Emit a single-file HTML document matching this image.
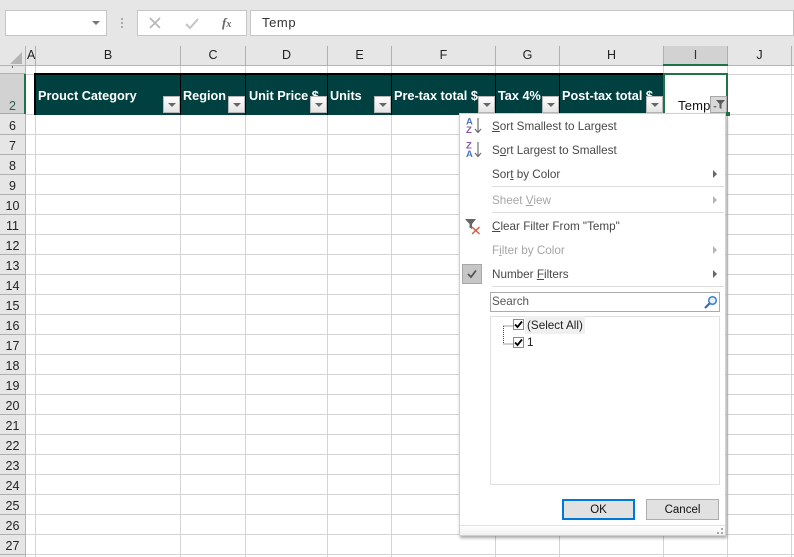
<!DOCTYPE html>
<html><head><meta charset="utf-8">
<style>
html,body{margin:0;padding:0}
body{width:794px;height:557px;overflow:hidden;background:#fff;position:relative;font-family:"Liberation Sans",sans-serif}
div,span.a,svg{position:absolute}
.top{left:0;top:0;width:794px;height:65px;background:#e6e6e6}
.box{background:#fff;border:1px solid #c6c6c6;box-sizing:border-box;top:10px;height:26px}
.v{width:1px;top:66px;height:491px;background:#d4d4d4}
.h{left:25px;width:769px;height:1px;background:#d4d4d4}
.ch{top:46px;height:19px;line-height:19px;text-align:center;font-size:12.5px;color:#222;border-right:1px solid #b0b0b0;box-sizing:content-box}
.rh{left:0;width:25px;height:19px;line-height:22px;background:#e6e6e6;border-bottom:1px solid #b0b0b0;text-align:center;font-size:12.5px;color:#222}
.hd{top:88px;font-size:12.7px;font-weight:bold;color:#fff;white-space:nowrap;line-height:16px}
.sep{top:74px;width:2px;height:41px;background:#000}
.fb{top:96px;width:17px;height:17px;box-sizing:border-box;border:1px solid #b8b8b8;background:linear-gradient(#fdfdfd,#e4e4e4)}
.fb:after{content:"";position:absolute;left:4px;top:6px;border-left:4px solid transparent;border-right:4px solid transparent;border-top:4px solid #666}
.mi{left:492px;font-size:11.7px;color:#484848;white-space:nowrap;line-height:16px}
.dis{color:#a6a6a6}
.ms{left:492px;width:232px;height:1px;background:#dcdcdc}
.ar{left:713px;width:0;height:0;border-top:4px solid transparent;border-bottom:4px solid transparent;border-left:4px solid #666}
.btn{top:499px;width:73px;height:21px;box-sizing:border-box;background:#e1e1e1;text-align:center;font-size:11.5px;color:#111}
.cb{width:11px;height:11px;box-sizing:border-box;border:1px solid #8a8a8a;background:#fff;left:513px}
</style></head><body>

<div class="top"></div>
<div class="box" style="left:5px;width:102px"></div>
<div style="left:92px;top:21px;border-left:4px solid transparent;border-right:4px solid transparent;border-top:4px solid #777;width:0;height:0"></div>
<div style="left:121px;top:18px;width:2px;height:2px;background:#aaa;box-shadow:0 4px 0 #aaa,0 8px 0 #aaa"></div>
<div class="box" style="left:137px;width:110px"></div>
<svg style="left:148px;top:16px" width="14" height="14"><path d="M2 2L12 12M12 2L2 12" stroke="#b5b5b5" stroke-width="1.6" fill="none"/></svg>
<svg style="left:184px;top:16px" width="16" height="14"><path d="M2 8L6 12L14 3" stroke="#c4c4c4" stroke-width="2" fill="none"/></svg>
<div style="left:222px;top:15px;font:italic bold 13px 'Liberation Serif',serif;color:#666">f<span style="font-size:10px">x</span></div>
<div class="box" style="left:250px;width:544px;padding-left:11px;font-size:13px;line-height:24px;color:#333;letter-spacing:.6px">Temp</div>

<!-- corner -->
<div style="left:10px;top:52px;width:0;height:0;border-left:12px solid transparent;border-bottom:12px solid #b4b4b4"></div>
<div style="left:25px;top:46px;width:1px;height:19px;background:#b0b0b0"></div>

<!-- column headers -->
<div style="left:0;top:65px;width:794px;height:1px;background:#b4b4b4"></div>
<div class="ch" style="left:26px;width:9px;line-height:19px;text-indent:1px">A</div>
<div class="ch" style="left:36px;width:144px">B</div>
<div class="ch" style="left:181px;width:64px">C</div>
<div class="ch" style="left:246px;width:81px">D</div>
<div class="ch" style="left:328px;width:63px">E</div>
<div class="ch" style="left:392px;width:103px">F</div>
<div class="ch" style="left:496px;width:63px">G</div>
<div class="ch" style="left:560px;width:103px">H</div>
<div class="ch" style="left:664px;width:63px;background:#d2d2d2;border-right:1px solid #b0b0b0;color:#333">I</div>
<div style="left:663px;top:64px;width:65px;height:2px;background:#217346"></div>
<div class="ch" style="left:728px;width:63px">J</div>

<!-- gridlines -->
<div class="v" style="left:35px"></div><div class="v" style="left:180px"></div><div class="v" style="left:245px"></div><div class="v" style="left:327px"></div><div class="v" style="left:391px"></div><div class="v" style="left:495px"></div><div class="v" style="left:559px"></div><div class="v" style="left:663px"></div><div class="v" style="left:727px"></div><div class="v" style="left:791px"></div>
<div class="h" style="top:74px"></div><div class="h" style="top:114px"></div><div class="h" style="top:134px"></div><div class="h" style="top:154px"></div><div class="h" style="top:174px"></div><div class="h" style="top:194px"></div><div class="h" style="top:214px"></div><div class="h" style="top:234px"></div><div class="h" style="top:254px"></div><div class="h" style="top:274px"></div><div class="h" style="top:294px"></div><div class="h" style="top:314px"></div><div class="h" style="top:334px"></div><div class="h" style="top:354px"></div><div class="h" style="top:374px"></div><div class="h" style="top:394px"></div><div class="h" style="top:414px"></div><div class="h" style="top:434px"></div><div class="h" style="top:454px"></div><div class="h" style="top:474px"></div><div class="h" style="top:494px"></div><div class="h" style="top:514px"></div><div class="h" style="top:534px"></div><div class="h" style="top:554px"></div>

<!-- row headers -->
<div style="left:0;top:66px;width:25px;height:491px;background:#e6e6e6"></div>
<div style="left:25px;top:46px;width:1px;height:511px;background:#b4b4b4"></div>
<div style="left:0;top:66px;width:25px;height:8px;background:#e6e6e6;border-bottom:1px solid #b0b0b0;box-sizing:border-box"></div>
<div style="left:12px;top:66px;width:1px;height:2px;background:#666"></div>
<div style="left:0;top:74px;width:25px;height:40px;background:#d2d2d2;border-bottom:1px solid #a8a8a8;box-sizing:border-box;text-align:center;font-size:12.5px;color:#2f5f50;line-height:64px;">2</div>
<div style="left:24px;top:74px;width:2px;height:40px;background:#217346"></div>
<div class="rh" style="top:115px">6</div><div class="rh" style="top:135px">7</div><div class="rh" style="top:155px">8</div><div class="rh" style="top:175px">9</div><div class="rh" style="top:195px">10</div><div class="rh" style="top:215px">11</div><div class="rh" style="top:235px">12</div><div class="rh" style="top:255px">13</div><div class="rh" style="top:275px">14</div><div class="rh" style="top:295px">15</div><div class="rh" style="top:315px">16</div><div class="rh" style="top:335px">17</div><div class="rh" style="top:355px">18</div><div class="rh" style="top:375px">19</div><div class="rh" style="top:395px">20</div><div class="rh" style="top:415px">21</div><div class="rh" style="top:435px">22</div><div class="rh" style="top:455px">23</div><div class="rh" style="top:475px">24</div><div class="rh" style="top:495px">25</div><div class="rh" style="top:515px">26</div><div class="rh" style="top:535px">27</div>

<!-- table header -->
<div style="left:35px;top:74px;width:628px;height:41px;background:#014040"></div>
<div style="left:34px;top:73px;width:629px;height:2px;background:#000"></div>
<div class="sep" style="left:34px"></div><div class="sep" style="left:180px;width:1px"></div><div class="sep" style="left:245px;width:1px"></div><div class="sep" style="left:327px;width:1px"></div><div class="sep" style="left:391px;width:1px"></div><div class="sep" style="left:495px;width:1px"></div><div class="sep" style="left:559px;width:1px"></div>
<div class="hd" style="left:38px">Prouct Category</div>
<div class="hd" style="left:183px">Region</div>
<div class="hd" style="left:249px">Unit Price $</div>
<div class="hd" style="left:330px">Units</div>
<div class="hd" style="left:394px">Pre-tax total $</div>
<div class="hd" style="left:498px">Tax 4%</div>
<div class="hd" style="left:562px">Post-tax total $</div>
<div class="fb" style="left:163px"></div><div class="fb" style="left:228px"></div><div class="fb" style="left:310px"></div><div class="fb" style="left:374px"></div><div class="fb" style="left:478px"></div><div class="fb" style="left:542px"></div><div class="fb" style="left:646px"></div>

<!-- selected cell -->
<div style="left:663px;top:73px;width:65px;height:41px;box-sizing:border-box;border:2px solid #217346;border-bottom:none;background:#fff"></div>
<div style="left:678px;top:98px;font-size:13px;color:#111;line-height:16px;letter-spacing:.2px">Temp</div>
<div style="left:710px;top:96px;width:17px;height:17px;box-sizing:border-box;border:1px solid #a8a8a8;background:#d8d8d8"></div>
<svg style="left:711px;top:97px" width="15" height="15"><path d="M5 3H14L10.5 7V12L8.500 11V7Z" fill="#5a5a5a"/><path d="M2 9H6L4 11Z" fill="#777"/></svg>
<div style="left:726px;top:112px;width:4px;height:4px;background:#217346"></div>

<!-- dropdown menu -->
<div style="left:459px;top:113px;width:267px;height:423px;background:#fff;border:1px solid #d0d0d0;box-sizing:border-box;box-shadow:1px 2px 3px rgba(0,0,0,.35)"></div>

<svg style="left:465px;top:116px" width="18" height="20"><text x="1" y="8.500" font-family="Liberation Sans" font-size="9.500" font-weight="bold" fill="#4a78c0">A</text><text x="1" y="17" font-family="Liberation Sans" font-size="9.500" font-weight="bold" fill="#8a55b0">Z</text><path d="M13 2V16M10 13L13 16.500L16 13" stroke="#666" stroke-width="1.100" fill="none"/></svg>
<svg style="left:465px;top:140px" width="18" height="20"><text x="1" y="8.500" font-family="Liberation Sans" font-size="9.500" font-weight="bold" fill="#8a55b0">Z</text><text x="1" y="17" font-family="Liberation Sans" font-size="9.500" font-weight="bold" fill="#4a78c0">A</text><path d="M13 2V16M10 13L13 16.500L16 13" stroke="#666" stroke-width="1.100" fill="none"/></svg>
<div class="mi" style="top:119px"><u>S</u>ort Smallest to Largest</div>
<div class="mi" style="top:143px">S<u>o</u>rt Largest to Smallest</div>
<div class="mi" style="top:167px">Sor<u>t</u> by Color</div>
<div class="ar" style="top:170px"></div>
<div class="ms" style="top:186px"></div>
<div class="mi dis" style="top:193px">Sheet <u>V</u>iew</div>
<div class="ar" style="top:196px;border-left-color:#b5b5b5"></div>
<div class="ms" style="top:212px"></div>
<svg style="left:464px;top:218px" width="20" height="18"><path d="M1 1H12L8 6V11L5.500 9.500V6Z" fill="#666"/><path d="M8 9L15.500 16M15.500 9L8 16" stroke="#d9553f" stroke-width="1.400" fill="none"/></svg>
<div class="mi" style="top:219px"><u>C</u>lear Filter From "Temp"</div>
<div class="mi dis" style="top:243px">F<u>i</u>lter by Color</div>
<div class="ar" style="top:246px;border-left-color:#b5b5b5"></div>
<div style="left:462px;top:264px;width:20px;height:20px;box-sizing:border-box;background:#c6c6c6;border:1px solid #a8a8a8"></div>
<svg style="left:466px;top:268px" width="12" height="12"><path d="M2 6L5 9L10 2.500" stroke="#555" stroke-width="1.800" fill="none"/></svg>
<div class="mi" style="top:267px">Number <u>F</u>ilters</div>
<div class="ar" style="top:270px"></div>
<div class="ms" style="top:286px"></div>

<div style="left:490px;top:292px;width:230px;height:20px;box-sizing:border-box;border:1px solid #ababab;background:#fff;font-size:11.7px;color:#555;line-height:17px;padding-left:1px">Search</div>
<svg style="left:703px;top:295px" width="15" height="15"><circle cx="9.500" cy="5.500" r="3.800" stroke="#3f7fbf" stroke-width="1.500" fill="#e4effa"/><path d="M6.500 8.500L2 13" stroke="#2f6fae" stroke-width="2.200" fill="none"/></svg>

<div style="left:490px;top:316px;width:230px;height:169px;box-sizing:border-box;border:1px solid #e0e0e0;background:#fff"></div>
<div style="left:525px;top:316px;width:60px;height:18px;background:#f0f0f0"></div>
<svg style="left:500px;top:320px" width="14" height="26"><path d="M3.500 6H13M3.500 6V24M3.500 24H13" stroke="#444" stroke-width="1" stroke-dasharray="1 1" fill="none"/></svg>
<div class="cb" style="top:319px"></div>
<svg style="left:513px;top:319px" width="11" height="11"><path d="M2 5.500L4.500 8L9 2.500" stroke="#000" stroke-width="1.800" fill="none"/></svg>
<div class="cb" style="top:337px"></div>
<svg style="left:513px;top:337px" width="11" height="11"><path d="M2 5.500L4.500 8L9 2.500" stroke="#000" stroke-width="1.800" fill="none"/></svg>
<div style="left:527px;top:318px;font-size:11.7px;color:#222;line-height:16px">(Select All)</div>
<div style="left:527px;top:335px;font-size:11.7px;color:#222;line-height:16px">1</div>

<div class="btn" style="left:562px;border:2px solid #0078d7;line-height:19px">OK</div>
<div class="btn" style="left:646px;border:1px solid #adadad;line-height:21px">Cancel</div>

<div style="left:460px;top:525px;width:265px;height:1px;background:#e2e2e2"></div>
<div style="left:460px;top:526px;width:265px;height:9px;background:linear-gradient(#fff,#f0f0f0)"></div>
<svg style="left:715px;top:528px" width="9" height="8"><path d="M6 0h2v2h-2zM2 4h2v2h-2zM6 4h2v2h-2z" fill="#aaa"/></svg>

</body></html>
